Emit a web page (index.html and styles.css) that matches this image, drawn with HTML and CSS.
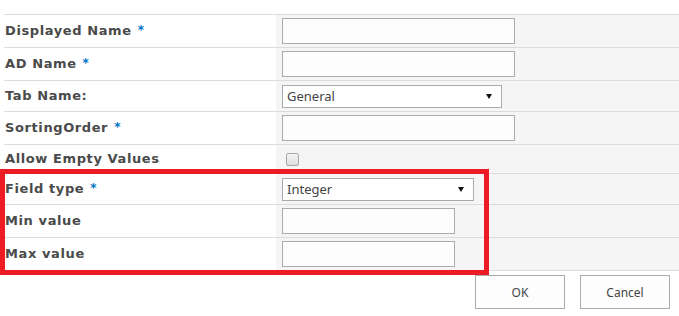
FILE: index.html
```html
<!DOCTYPE html>
<html lang="en">
<head>
    <meta charset="UTF-8">
    <meta name="viewport" content="width=device-width, initial-scale=1.0">
    <title>Field Properties</title>
    <link rel="stylesheet" href="styles.css">
</head>
<body>

    <div class="dialog">
        <div class="form-table">
            <div class="row h33">
                <div class="label">Displayed Name <span class="req">*</span></div>
                <div class="field"><input type="text" class="text-input wide"></div>
            </div>
            <div class="row h33">
                <div class="label">AD Name <span class="req">*</span></div>
                <div class="field"><input type="text" class="text-input wide"></div>
            </div>
            <div class="row h31">
                <div class="label">Tab Name:</div>
                <div class="field">
                    <span class="select-wrap tab-select">
                        <select>
                            <option>General</option>
                        </select>
                    </span>
                </div>
            </div>
            <div class="row h33">
                <div class="label">SortingOrder <span class="req">*</span></div>
                <div class="field"><input type="text" class="text-input wide"></div>
            </div>
            <div class="row h29">
                <div class="label">Allow Empty Values</div>
                <div class="field"><span class="checkbox"></span></div>
            </div>
            <div class="row h31">
                <div class="label">Field type <span class="req">*</span></div>
                <div class="field">
                    <span class="select-wrap type-select">
                        <select>
                            <option>Integer</option>
                        </select>
                    </span>
                </div>
            </div>
            <div class="row h33">
                <div class="label">Min value</div>
                <div class="field"><input type="text" class="text-input narrow"></div>
            </div>
            <div class="row h33 last">
                <div class="label">Max value</div>
                <div class="field"><input type="text" class="text-input narrow"></div>
            </div>

            <!-- annotation box drawn over the screenshot -->
            <div class="highlight"></div>
        </div>

        <div class="buttons">
            <button>OK</button>
            <button>Cancel</button>
        </div>
    </div>

</body>
</html>
```

FILE: styles.css
```css
body{
    margin: 0;
    background: #fff;
    font-family: "DejaVu Sans", Verdana, sans-serif;
    color: #444;
}
.dialog{
    width: 679px;
    padding-top: 14px;
}
.form-table{
    position: relative;
    margin-left: 4px;
}
.row{
    display: grid;
    grid-template-columns: 272px 1fr;
    border-top: 1px solid #dcdcdc;
    box-sizing: border-box;
}
.row.last{
    border-bottom: 1px solid #dcdcdc;
}
.h33{ height: 33px; }
.h31{ height: 31px; }
.h29{ height: 29px; }
.row.last{ height: 34px; }

.label{
    display: flex;
    align-items: center;
    padding-left: 1px;
    padding-bottom: 2px;
    font-size: 13px;
    font-weight: bold;
    letter-spacing: 0.6px;
    color: #4a4a4a;
    white-space: nowrap;
}
.label .req{
    color: #0072c6;
    margin-left: 6px;
    font-size: 12px;
    letter-spacing: 0;
}
.field{
    display: flex;
    align-items: center;
    padding-left: 6px;
    background-color: #f5f5f5;
}

.text-input{
    height: 26px;
    box-sizing: border-box;
    border: 1px solid #ababab;
    background: #fdfdfd;
    outline: none;
    padding: 0 4px;
}
.text-input.wide{
    width: 233px;
}
.text-input.narrow{
    width: 173px;
}

.select-wrap{
    position: relative;
    display: inline-block;
}
.select-wrap select{
    appearance: none;
    -webkit-appearance: none;
    width: 100%;
    height: 23px;
    box-sizing: border-box;
    border: 1px solid #ababab;
    border-radius: 0;
    background: #fff;
    font-family: "Noto Sans", "Open Sans", sans-serif;
    font-size: 13px;
    color: #444;
    padding: 0 0 0 4px;
    outline: none;
}
.select-wrap::after{
    content: "";
    position: absolute;
    right: 10px;
    top: 9px;
    border-left: 3px solid transparent;
    border-right: 3px solid transparent;
    border-top: 5px solid #111;
}
.tab-select{
    width: 220px;
}
.type-select{
    width: 192px;
}

.checkbox{
    display: inline-block;
    width: 11px;
    height: 11px;
    margin-left: 4px;
    border: 1px solid #a9a9a9;
    border-radius: 2px;
    background: linear-gradient(#f4f4f4, #dedede);
}

.highlight{
    position: absolute;
    left: -4px;
    top: 155px;
    width: 479px;
    height: 96px;
    border: 5px solid #ed1c24;
    pointer-events: none;
}

.buttons{
    display: flex;
    justify-content: flex-end;
    gap: 15px;
    padding-right: 9px;
    margin-top: 4px;
}
.buttons button{
    width: 90px;
    height: 34px;
    border: 1px solid #ababab;
    background: #fdfdfd;
    font-family: "Noto Sans", "Open Sans", sans-serif;
    font-size: 12px;
    color: #444;
}
```
